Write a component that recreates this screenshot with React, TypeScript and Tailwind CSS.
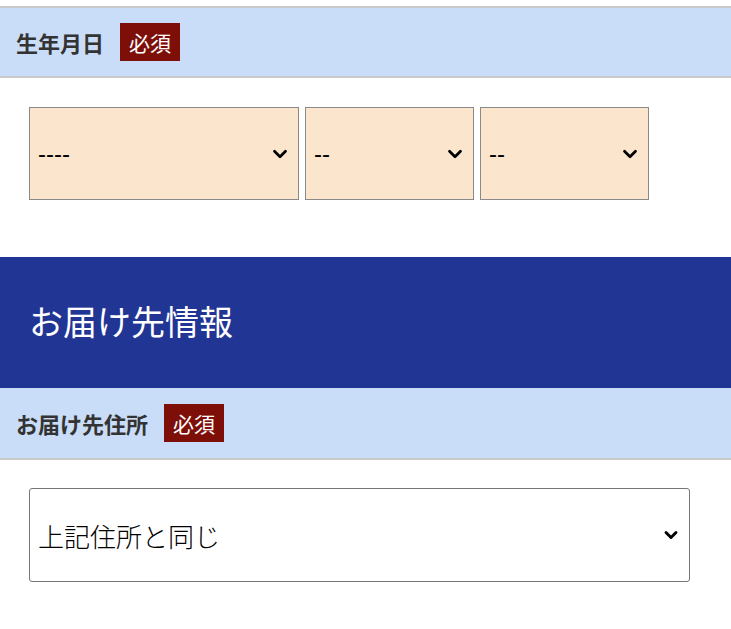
import { ChevronDown } from "lucide-react";

const jp = { fontFamily: '"Noto Sans CJK JP", "Noto Sans", sans-serif' };

function Required() {
  return (
    <span className="flex h-[38px] w-[60px] items-center justify-center bg-[#7d0f08] text-[21px] leading-none text-white">
      必須
    </span>
  );
}

function Select({ label, width }: { label: string; width: string }) {
  return (
    <div
      className={`relative flex h-[93px] ${width} items-center border border-[#8a8a8a] bg-[#fce5cd] pl-2`}
    >
      <span className="text-[24px] text-black" style={{ fontFamily: '"Liberation Sans", Arial, sans-serif' }}>
        {label}
      </span>
      <ChevronDown className="absolute right-[7px] h-[22px] w-[22px] text-black" strokeWidth={3} />
    </div>
  );
}

export default function App() {
  return (
    <div className="min-h-screen bg-white pt-[6px] text-[#333]" style={jp}>
      {/* 生年月日 */}
      <div className="flex h-[72px] items-center gap-4 border-y-2 border-[#c9c9c9] bg-[#c9ddf8] pl-4">
        <span className="text-[22px] font-bold">生年月日</span>
        <Required />
      </div>
      <div className="flex gap-[6px] pt-[29px] pl-[29px]">
        <Select label="----" width="w-[270px]" />
        <Select label="--" width="w-[169px]" />
        <Select label="--" width="w-[169px]" />
      </div>

      {/* お届け先情報 */}
      <div className="mt-[57px] flex h-[131px] items-center bg-[#213594] pl-[29px]">
        <h2 className="-mt-1 text-[34px] font-normal text-white">お届け先情報</h2>
      </div>
      <div className="flex h-[72px] items-center gap-4 border-b-2 border-[#c9c9c9] bg-[#c9ddf8] pl-4">
        <span className="text-[22px] font-bold">お届け先住所</span>
        <Required />
      </div>
      <div className="pt-[28px] pl-[29px]">
        <div className="relative flex h-[94px] w-[661px] items-center rounded-[3px] border border-[#767676] bg-white pl-2">
          <span className="text-[26px] font-light text-black">上記住所と同じ</span>
          <ChevronDown className="absolute right-[8px] h-[20px] w-[20px] text-black" strokeWidth={3.5} />
        </div>
      </div>
    </div>
  );
}
